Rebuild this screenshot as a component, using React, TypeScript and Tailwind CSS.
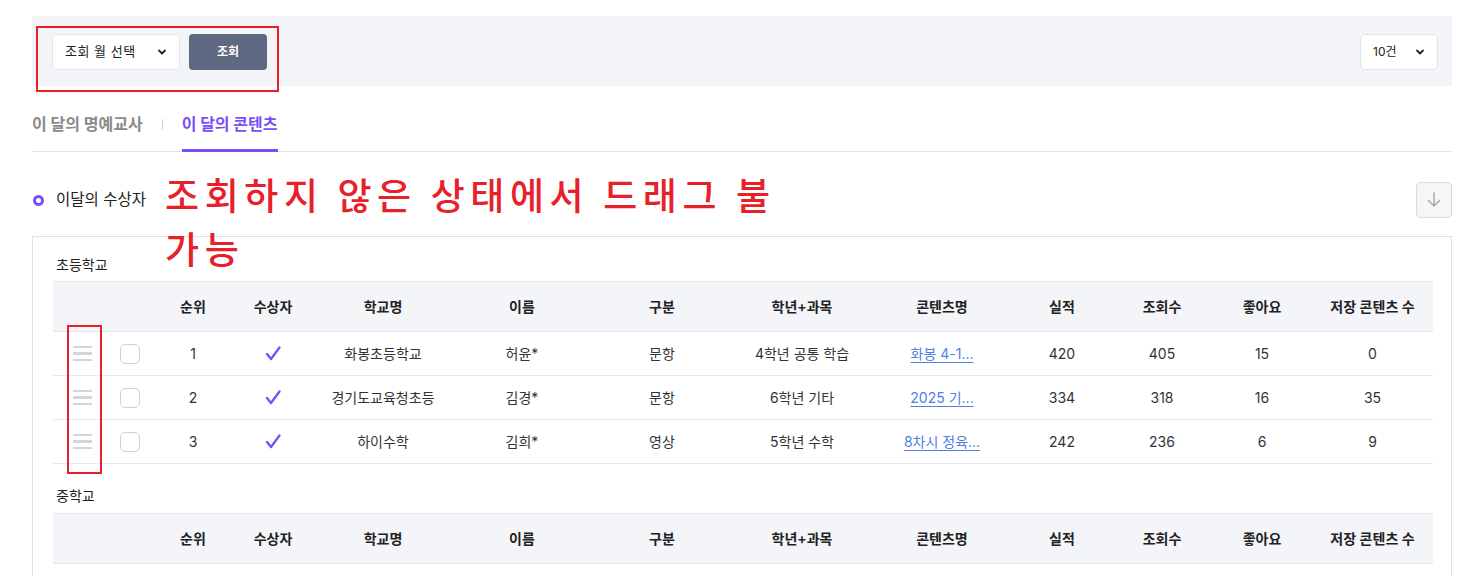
import React from "react";

const FONT = { fontFamily: '"Inter", "Noto Sans CJK KR", sans-serif' };

const cols = [53, 48, 78, 82, 138, 140, 140, 140, 140, 100, 100, 100, 121];
const heads = ["", "", "순위", "수상자", "학교명", "이름", "구분", "학년+과목", "콘텐츠명", "실적", "조회수", "좋아요", "저장 콘텐츠 수"];

type Row = { rank: number; school: string; name: string; kind: string; grade: string; content: string; perf: number; views: number; likes: number; saved: number };

const elem: Row[] = [
  { rank: 1, school: "화봉초등학교", name: "허윤*", kind: "문항", grade: "4학년 공통 학습", content: "화봉 4-1...", perf: 420, views: 405, likes: 15, saved: 0 },
  { rank: 2, school: "경기도교육청초등", name: "김경*", kind: "문항", grade: "6학년 기타", content: "2025 기...", perf: 334, views: 318, likes: 16, saved: 35 },
  { rank: 3, school: "하이수학", name: "김희*", kind: "영상", grade: "5학년 수학", content: "8차시 정육...", perf: 242, views: 236, likes: 6, saved: 9 },
];

function Chevron() {
  return (
    <svg width="10" height="10" viewBox="0 0 10 10" fill="none">
      <path d="M2 3.5 L5 6.5 L8 3.5" stroke="#1f2433" strokeWidth="1.8" strokeLinecap="round" strokeLinejoin="round" />
    </svg>
  );
}

function Grip() {
  return (
    <div className="flex flex-col gap-[4px] w-[19px] mx-auto">
      <div className="h-[2.5px] bg-[#d3d5da]" />
      <div className="h-[2.5px] bg-[#d3d5da]" />
      <div className="h-[2.5px] bg-[#d3d5da]" />
    </div>
  );
}

function Check() {
  return (
    <svg width="16" height="15" viewBox="0 0 16 15" fill="none" className="mx-auto">
      <path d="M2 8 L6 13 L14.5 1.5" stroke="#7b4dfa" strokeWidth="2.3" strokeLinecap="round" strokeLinejoin="round" />
    </svg>
  );
}

function Table({ rows }: { rows: Row[] }) {
  return (
    <table className="table-fixed border-collapse w-[1380px]">
      <colgroup>
        {cols.map((w, i) => (
          <col key={i} style={{ width: w }} />
        ))}
      </colgroup>
      <thead>
        <tr className="bg-[#f4f5f8] h-[50px] border-t border-b border-[#e3e5ea]">
          {heads.map((h, i) => (
            <th key={i} className="text-[14px] font-semibold text-[#222] text-center">
              {h}
            </th>
          ))}
        </tr>
      </thead>
      <tbody>
        {rows.map((r) => (
          <tr key={r.rank} className="h-[44px] border-b border-[#e8e9ec] text-[14px] text-[#333] text-center">
            <td><div className="pl-[6px]"><Grip /></div></td>
            <td>
              <div className="w-[20px] h-[20px] rounded-[5px] border border-[#cfd1d6] bg-white mx-auto" />
            </td>
            <td>{r.rank}</td>
            <td><Check /></td>
            <td>{r.school}</td>
            <td>{r.name}</td>
            <td>{r.kind}</td>
            <td>{r.grade}</td>
            <td>
              <span className="text-[#4f7fe3] underline underline-offset-[3px]">{r.content}</span>
            </td>
            <td>{r.perf}</td>
            <td>{r.views}</td>
            <td>{r.likes}</td>
            <td>{r.saved}</td>
          </tr>
        ))}
      </tbody>
    </table>
  );
}

export default function App() {
  return (
    <div className="relative bg-white w-[1476px] h-[576px] overflow-hidden pl-8 pr-6 pt-4" style={FONT}>
      {/* filter bar */}
      <div className="bg-[#f4f5f8] h-[70px] flex items-center justify-between pl-5 pr-[14px] pt-[1px]">
        <div className="flex items-center gap-[9px]">
          <div className="w-[128px] h-[36px] bg-white border border-[#e2e4e8] rounded-[5px] flex items-center justify-between pl-[12px] pr-[12px]">
            <span className="text-[13px] tracking-[0.5px] text-[#222]">조회 월 선택</span>
            <Chevron />
          </div>
          <div className="w-[78px] h-[36px] bg-[#5f6881] rounded-[4px] flex items-center justify-center">
            <span className="text-[12px] font-bold text-white">조회</span>
          </div>
        </div>
        <div className="w-[78px] h-[36px] bg-white border border-[#e2e4e8] rounded-[5px] flex items-center justify-between pl-[12px] pr-[12px]">
          <span className="text-[12px] text-[#222]">10건</span>
          <Chevron />
        </div>
      </div>

      {/* tabs */}
      <div className="flex items-end h-[66px] border-b border-[#e3e4e8]">
        <div className="flex items-center h-[42px] pb-[12px] text-[16px] font-bold text-[#8a8a8a]">이 달의 명예교사</div>
        <div className="flex items-center h-[42px] pb-[12px] px-[19px]">
          <div className="w-[1px] h-[11px] bg-[#d5d5d5]" />
        </div>
        <div className="flex items-center h-[42px] pb-[12px] text-[16px] font-bold text-[#7b4dfa] border-b-[3px] border-[#7b4dfa] mb-[-1px]">
          이 달의 콘텐츠
        </div>
      </div>

      {/* section title */}
      <div className="flex items-center justify-between mt-[30px] h-[36px]">
        <div className="flex items-center gap-[12px] pl-[1px]">
          <div className="w-[11px] h-[11px] rounded-full border-[3px] border-[#7b4dfa]" />
          <span className="text-[15.5px] text-[#222]">이달의 수상자</span>
        </div>
        <div className="w-[36px] h-[36px] rounded-[4px] border border-[#dcdcdc] bg-[#f6f6f6] flex items-center justify-center">
          <svg width="14" height="16" viewBox="0 0 14 16" fill="none">
            <path d="M7 1 V14 M1.5 8.5 L7 14 L12.5 8.5" stroke="#a9a9a9" strokeWidth="1.5" strokeLinecap="round" strokeLinejoin="round" />
          </svg>
        </div>
      </div>

      {/* card */}
      <div className="mt-[18px] border border-[#e0e1e5] pl-[20px] pr-[18px] pt-[17px] pb-[20px]">
        <div className="h-[20px] flex items-center pl-[3px] text-[14px] text-[#222] mb-[7px]">초등학교</div>
        <Table rows={elem} />
        <div className="h-[20px] flex items-center pl-[3px] text-[14px] text-[#222] mt-[21px] mb-[8px]">중학교</div>
        <Table rows={[]} />
      </div>

      {/* annotations */}
      <div className="absolute left-[36px] top-[26px] w-[243px] h-[66px] border-2 border-[#e8202a]" />
      <div className="absolute left-[67px] top-[325px] w-[35px] h-[149px] border-2 border-[#e8202a]" />
      <div
        className="absolute left-[165px] top-[167px] w-[630px] text-[37px] tracking-[5.6px] leading-[54px] font-medium text-[#e8202a]"
        style={{ fontFamily: '"Noto Sans CJK KR", sans-serif' }}
      >
        조회하지 않은 상태에서 드래그 불가능
      </div>
    </div>
  );
}
